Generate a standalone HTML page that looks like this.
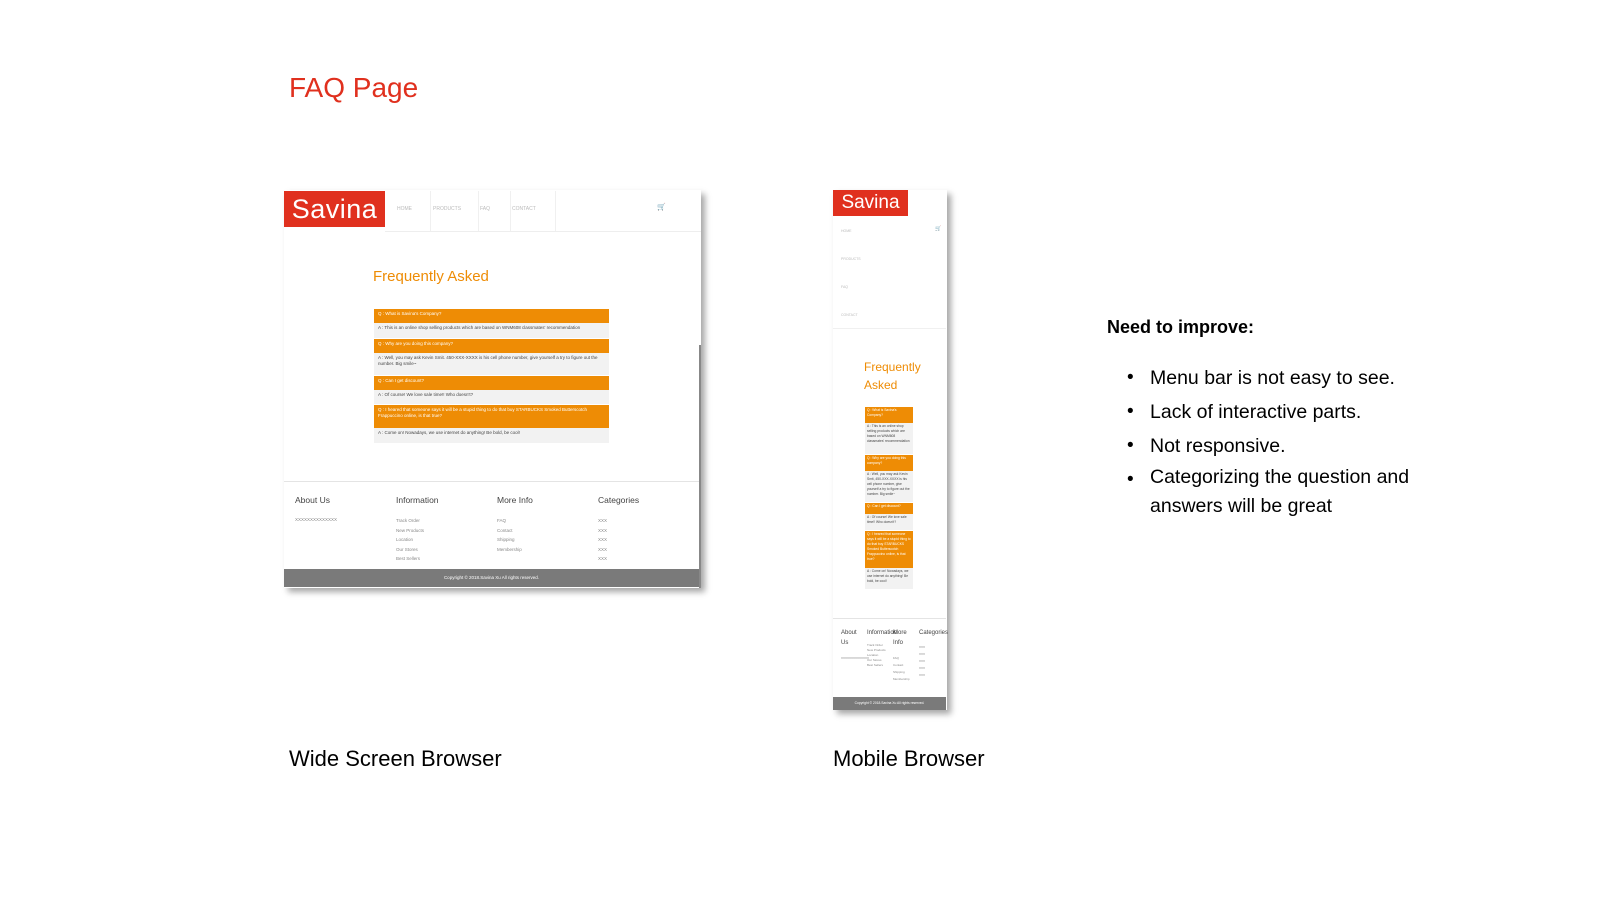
<!DOCTYPE html>
<html><head><meta charset="utf-8"><style>
*{margin:0;padding:0;box-sizing:border-box}
body{width:1600px;height:900px;background:#fff;position:relative;overflow:hidden;font-family:"Liberation Sans",Arial,sans-serif}
.a{position:absolute;white-space:nowrap}
.q{position:absolute;background:#ee8c05;color:#fff;font-size:4.5px;padding:2px 4px;line-height:6px;white-space:normal}
.ans{position:absolute;background:#f2f2f2;color:#444;font-size:4.5px;padding:2px 4px;line-height:6px;white-space:normal}
.nav{position:absolute;color:#bbb;font-size:5px}
.fh{position:absolute;color:#444;font-size:8.5px}
.fi{position:absolute;color:#888;font-size:4.5px;line-height:9.6px}
</style></head><body>
<div class="a" style="left:289px;top:72px;font-size:28px;color:#e0301e">FAQ Page</div>

<!-- wide mockup -->
<div class="a" style="left:284px;top:190px;width:417px;height:398px;background:#fff;box-shadow:4px 4px 6px rgba(0,0,0,.35)"></div>
<div class="a" style="left:284px;top:191px;width:101px;height:36px;background:#e0301e;color:#fff;font-size:27px;line-height:36px;text-align:center;letter-spacing:0.5px">Savina</div>
<div class="a" style="left:385px;top:231px;width:316px;height:1px;background:#eee"></div>
<div class="a" style="left:430px;top:191px;width:1px;height:40px;background:#f0f0f0"></div>
<div class="a" style="left:478px;top:191px;width:1px;height:40px;background:#f0f0f0"></div>
<div class="a" style="left:510px;top:191px;width:1px;height:40px;background:#f0f0f0"></div>
<div class="a" style="left:555px;top:191px;width:1px;height:40px;background:#f0f0f0"></div>
<div class="nav" style="left:397px;top:206px">HOME</div>
<div class="nav" style="left:433px;top:206px">PRODUCTS</div>
<div class="nav" style="left:480px;top:206px">FAQ</div>
<div class="nav" style="left:512px;top:206px">CONTACT</div>
<div class="a" style="left:657px;top:203px;font-size:7px">&#128722;</div>
<div class="a" style="left:699px;top:345px;width:2px;height:243px;background:#888"></div>
<div class="a" style="left:373px;top:268px;font-size:15px;color:#ee8c05">Frequently Asked</div>
<div class="q" style="left:374px;top:309px;width:235px;height:14px">Q : What is Savina's Company?</div>
<div class="ans" style="left:374px;top:323px;width:235px;height:15px">A : This is an online shop selling products which are based on WNM608 classmates' recommendation</div>
<div class="q" style="left:374px;top:339px;width:235px;height:14px">Q : Why are you doing this company?</div>
<div class="ans" style="left:374px;top:353px;width:235px;height:22px">A : Well, you may ask Kevin Smit. 450-XXX-XXXX is his cell phone number, give yourself a try to figure out the number. Big smile~</div>
<div class="q" style="left:374px;top:376px;width:235px;height:14px">Q : Can I get discount?</div>
<div class="ans" style="left:374px;top:390px;width:235px;height:14px">A : Of course! We love sale time!! Who doesn't?</div>
<div class="q" style="left:374px;top:405px;width:235px;height:23px">Q : I heared that someone says it will be a stupid thing to do that buy STARBUCKS Smoked Butterscotch Frappuccino online, is that true?</div>
<div class="ans" style="left:374px;top:428px;width:235px;height:15px">A : Come on! Nowadays, we use internet do anything! Be bold, be cool!</div>
<div class="a" style="left:284px;top:481px;width:415px;height:1px;background:#e4e4e4"></div>
<div class="fh" style="left:295px;top:495px">About Us</div>
<div class="fh" style="left:396px;top:495px">Information</div>
<div class="fh" style="left:497px;top:495px">More Info</div>
<div class="fh" style="left:598px;top:495px">Categories</div>
<div class="fi" style="left:295px;top:515px">XXXXXXXXXXXXXX</div>
<div class="fi" style="left:396px;top:516px">Track Order<br>New Products<br>Location<br>Our Stores<br>Best Sellers</div>
<div class="fi" style="left:497px;top:516px">FAQ<br>Contact<br>Shipping<br>Membership</div>
<div class="fi" style="left:598px;top:516px">XXX<br>XXX<br>XXX<br>XXX<br>XXX</div>
<div class="a" style="left:284px;top:569px;width:415px;height:18px;background:#7a7a7a;color:#fff;font-size:4.5px;line-height:18px;text-align:center">Copyright © 2018.Savina Xu All rights reserved.</div>

<!-- mobile mockup -->
<div class="a" style="left:833px;top:190px;width:114px;height:520px;background:#fff;box-shadow:4px 4px 6px rgba(0,0,0,.35)"></div>
<div class="a" style="left:833px;top:190px;width:75px;height:26px;background:#e0301e;color:#fff;font-size:19px;line-height:26px;text-align:center">Savina</div>
<div class="nav" style="left:841px;top:229px;font-size:3.5px">HOME</div>
<div class="nav" style="left:841px;top:257px;font-size:3.5px">PRODUCTS</div>
<div class="nav" style="left:841px;top:285px;font-size:3.5px">FAQ</div>
<div class="nav" style="left:841px;top:313px;font-size:3.5px">CONTACT</div>
<div class="a" style="left:935px;top:226px;font-size:5px">&#128722;</div>
<div class="a" style="left:833px;top:328px;width:113px;height:1px;background:#f0f0f0"></div>
<div class="a" style="left:864px;top:358px;font-size:12px;line-height:18px;color:#ee8c05;white-space:normal;width:60px">Frequently Asked</div>
<div class="q" style="left:865px;top:407px;width:48px;height:16px;font-size:3.3px;line-height:5px;padding:1px 2px">Q : What is Savina's Company?</div>
<div class="ans" style="left:865px;top:423px;width:48px;height:31px;font-size:3.3px;line-height:5px;padding:1px 2px">A : This is an online shop selling products which are based on WNM608 classmates' recommendation</div>
<div class="q" style="left:865px;top:455px;width:48px;height:16px;font-size:3.3px;line-height:5px;padding:1px 2px">Q : Why are you doing this company?</div>
<div class="ans" style="left:865px;top:471px;width:48px;height:31px;font-size:3.3px;line-height:5px;padding:1px 2px">A : Well, you may ask Kevin Smit, 450-XXX-XXXX is his cell phone number, give yourself a try to figure out the number. Big smile~</div>
<div class="q" style="left:865px;top:503px;width:48px;height:11px;font-size:3.3px;line-height:5px;padding:1px 2px">Q : Can I get discount?</div>
<div class="ans" style="left:865px;top:514px;width:48px;height:16px;font-size:3.3px;line-height:5px;padding:1px 2px">A : Of course! We love sale time!! Who doesn't?</div>
<div class="q" style="left:865px;top:531px;width:48px;height:37px;font-size:3.3px;line-height:5px;padding:1px 2px">Q : I heared that someone says it will be a stupid thing to do that buy STARBUCKS Smoked Butterscotch Frappuccino online, is that true?</div>
<div class="ans" style="left:865px;top:568px;width:48px;height:21px;font-size:3.3px;line-height:5px;padding:1px 2px">A : Come on! Nowadays, we use internet do anything! Be bold, be cool!</div>
<div class="a" style="left:833px;top:618px;width:113px;height:1px;background:#e4e4e4"></div>
<div class="fh" style="left:841px;top:628px;font-size:6px;line-height:10px;white-space:normal;width:22px">About Us</div>
<div class="fh" style="left:867px;top:628px;font-size:6px;line-height:10px">Information</div>
<div class="fh" style="left:893px;top:628px;font-size:6px;line-height:10px;white-space:normal;width:20px;background:transparent">More Info</div>
<div class="fh" style="left:919px;top:628px;font-size:6px;line-height:10px">Categories</div>
<div class="fi" style="left:841px;top:654px;font-size:3px">XXXXXXXXXXXXXX</div>
<div class="fi" style="left:867px;top:643px;font-size:3px;line-height:5px;white-space:normal;width:22px">Track Order<br>New Products<br>Location<br>Our Stores<br>Best Sellers</div>
<div class="fi" style="left:893px;top:655px;font-size:3px;line-height:7px">FAQ<br>Contact<br>Shipping<br>Membership</div>
<div class="fi" style="left:919px;top:644px;font-size:3px;line-height:7px">XXX<br>XXX<br>XXX<br>XXX<br>XXX</div>
<div class="a" style="left:833px;top:697px;width:113px;height:13px;background:#7a7a7a;color:#fff;font-size:3.3px;line-height:13px;text-align:center">Copyright © 2018.Savina Xu All rights reserved.</div>

<div class="a" style="left:289px;top:746px;font-size:22px;color:#000">Wide Screen Browser</div>
<div class="a" style="left:833px;top:746px;font-size:22px;color:#000">Mobile Browser</div>

<div class="a" style="left:1107px;top:317px;font-size:18px;font-weight:bold;color:#000">Need to improve:</div>
<div class="a" style="left:1127px;top:361px;font-size:19px;line-height:34px;color:#000">•<br>•<br>•<br>•</div>
<div class="a" style="left:1150px;top:361px;font-size:19.5px;line-height:34px;color:#000;white-space:normal;width:300px">Menu bar is not easy to see.<br>Lack of interactive parts.<br>Not responsive.<br><span style="line-height:29px;display:inline-block;margin-top:0">Categorizing the question and answers will be great</span></div>
</body></html>
